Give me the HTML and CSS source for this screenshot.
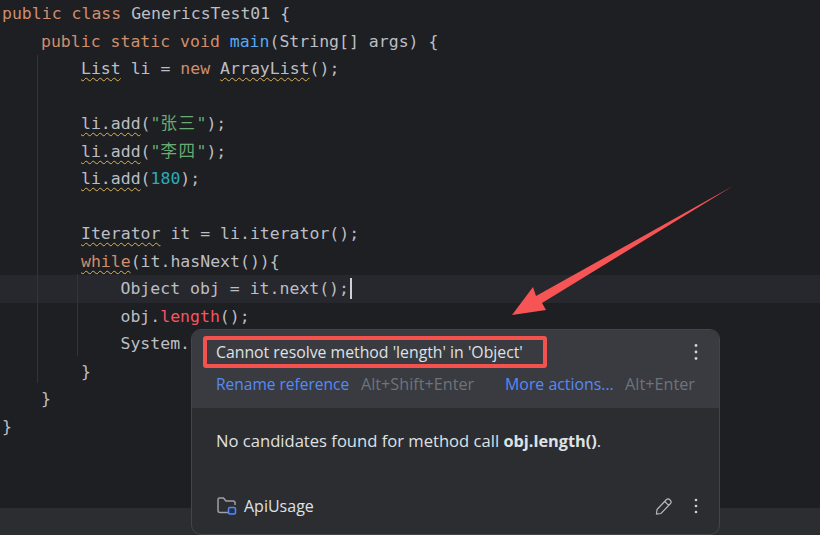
FILE: index.html
```html
<!DOCTYPE html>
<html lang="en">
<head>
<meta charset="utf-8">
<title>GenericsTest01</title>
<link rel="stylesheet" href="styles.css">
</head>
<body>
<div class="window">
  <main class="editor">
    <span class="guide guide-outer"></span>
    <span class="guide guide-inner"></span>
    <div class="line"><span class="kw">public class</span> GenericsTest01 {</div>
    <div class="line i1"><span class="kw">public static void</span> <span class="fn">main</span>(String[] args) {</div>
    <div class="line i2"><span class="warn">List</span> li = <span class="kw">new</span> <span class="warn">ArrayList</span>();</div>
    <div class="line"></div>
    <div class="line i2"><span class="warn">li.add</span>(<span class="str">"<span class="cjk">张三</span>"</span>);</div>
    <div class="line i2"><span class="warn">li.add</span>(<span class="str">"<span class="cjk">李四</span>"</span>);</div>
    <div class="line i2"><span class="warn">li.add</span>(<span class="num">180</span>);</div>
    <div class="line"></div>
    <div class="line i2"><span class="warn">Iterator</span> it = li.iterator();</div>
    <div class="line i2"><span class="warn kw">while</span>(it.hasNext()){</div>
    <div class="line i3 current">Object obj = it.next();<span class="caret"></span></div>
    <div class="line i3">obj.<span class="err">length</span>();</div>
    <div class="line i3">System.</div>
    <div class="line i2">}</div>
    <div class="line i1">}</div>
    <div class="line">}</div>
  </main>
  <div class="statusbar"></div>

  <svg class="arrow" width="820" height="535" viewBox="0 0 820 535" aria-hidden="true">
    <polygon points="733,186 536,296 533,287 512,315 546,310 542,303" fill="#f65455"/>
  </svg>

  <section class="popup">
    <header class="popup-head">
      <div class="title-row">
        <div class="title-box">Cannot resolve method 'length' in 'Object'</div>
        <svg class="kebab" width="4" height="18" viewBox="0 0 4 18" aria-hidden="true"><circle cx="2" cy="2.500" r="1.400"/><circle cx="2" cy="9" r="1.400"/><circle cx="2" cy="15.500" r="1.400"/></svg>
      </div>
      <div class="actions">
        <a class="link link-first">Rename reference</a><span class="key">Alt+Shift+Enter</span>
        <a class="link link-second">More actions...</a><span class="key">Alt+Enter</span>
      </div>
    </header>
    <div class="popup-body">No candidates found for method call <b>obj.length()</b>.</div>
    <footer class="popup-foot">
      <svg class="folder" width="20" height="18" viewBox="0 0 20 18" aria-hidden="true">
        <path d="M12 15.500H3a2 2 0 0 1-2-2V2.500a1.500 1.500 0 0 1 1.500-1.500h4l2.500 3h7a2 2 0 0 1 2 2v2" fill="none" stroke="#9da0a8" stroke-width="1.500"/>
        <rect x="11.500" y="10.500" width="7" height="6.500" rx="1.500" fill="#25324d" stroke="#548af7" stroke-width="1.500"/>
      </svg>
      <span class="foot-name">ApiUsage</span>
      <svg class="pencil" width="18" height="18" viewBox="0 0 18 18" aria-hidden="true">
        <path d="M2 12.500 11.500 2.500a2 2 0 0 1 3 0l1 1a2 2 0 0 1 0 3L6 16.500l-4.500.5zM9.800 4.500l3.900 3.900" fill="none" stroke="#b4b8bf" stroke-width="1.200"/>
      </svg>
      <svg class="kebab" width="4" height="16" viewBox="0 0 4 16" aria-hidden="true"><circle cx="2" cy="2" r="1.300"/><circle cx="2" cy="8" r="1.300"/><circle cx="2" cy="14" r="1.300"/></svg>
    </footer>
  </section>
</div>
</body>
</html>
```
FILE: styles.css
```css
* { box-sizing: border-box; }
html, body { margin: 0; padding: 0; }
body { background: #1e1f22; overflow: hidden; }

.window {
  position: relative;
  width: 820px;
  height: 535px;
  display: flex;
  flex-direction: column;
  overflow: hidden;
}

.editor {
  position: relative;
  height: 508px;
  flex: none;
  background: #1e1f22;
  font: 16.500px/27.500px "DejaVu Sans Mono", "Noto Sans CJK SC", monospace;
  color: #bcbec4;
}
.statusbar { flex: 1; background: #2b2d30; }

.line { height: 27.500px; padding-left: 2px; white-space: pre; }
.i1 { padding-left: 41px; }
.i2 { padding-left: 81px; }
.i3 { padding-left: 120.500px; }
.current { background: #26282e; }

.kw { color: #cf8e6d; }
.fn { color: #56a8f5; }
.str { color: #6aab73; }
.num { color: #2aacb8; }
.err { color: #f75464; }
.cjk { letter-spacing: 1.500px; }
.warn {
  text-decoration: underline wavy #d9b45f 1px;
  text-underline-offset: 3px;
}
.caret {
  display: inline-block;
  width: 2px;
  height: 21px;
  margin-left: 1px;
  background: #ced0d6;
  vertical-align: -5px;
}

.guide { position: absolute; width: 1px; background: #313438; z-index: 1; }
.guide-outer { left: 37px; top: 55px; height: 328px; }
.guide-inner { left: 77px; top: 274px; height: 82px; }

.arrow { position: absolute; left: 0; top: 0; z-index: 2; }

.popup {
  position: absolute;
  left: 191px;
  top: 329px;
  width: 529px;
  height: 206px;
  z-index: 3;
  display: flex;
  flex-direction: column;
  background: #2b2d30;
  border: 1px solid #43454a;
  border-radius: 10px;
  overflow: hidden;
  font: 16px/20px "Open Sans", "Noto Sans", sans-serif;
  color: #dfe1e5;
}

.popup-head {
  height: 78px;
  background: #393b40;
  padding: 6px 0 0 11px;
  flex: none;
}
.title-row { display: flex; align-items: center; justify-content: space-between; padding-right: 21px; }
.title-box {
  width: 344px;
  height: 32px;
  border: 4px solid #f4524f;
  border-radius: 3px;
  padding-left: 9px;
  font-size: 15.800px;
  line-height: 24px;
  white-space: nowrap;
}
.kebab { fill: #ced0d6; flex: none; }

.actions {
  display: flex;
  margin-top: 6px;
  padding-left: 13px;
  white-space: nowrap;
}
.link { color: #548af7; font-size: 15.500px; }
.key { color: #6f737a; font-size: 16.200px; }
.link-first { width: 145px; }
.link-second { width: 120px; margin-left: 31px; font-size: 15.850px; }

.popup-body {
  padding: 23px 24px 0;
  height: 77px;
  flex: none;
  font-size: 16.600px;
}
.popup-body b { font-weight: 700; font-size: 16.300px; }

.popup-foot {
  display: flex;
  align-items: center;
  padding: 11px 21px 0 25px;
}
.folder { flex: none; }
.foot-name { margin-left: 7px; flex: 1; }
.pencil { margin-right: 21px; flex: none; }
```
